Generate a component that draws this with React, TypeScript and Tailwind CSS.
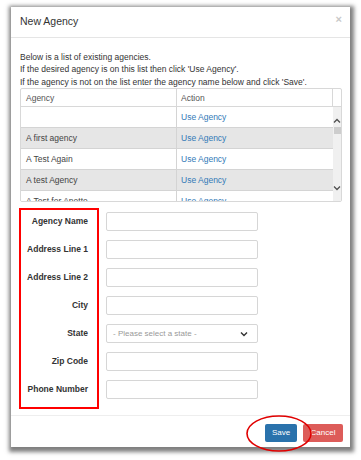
import React from "react";

const rows = ["", "A first agency", "A Test Again", "A test Agency", "A Test for Anette"];
const fields = ["Agency Name", "Address Line 1", "Address Line 2", "City", "State", "Zip Code", "Phone Number"];

export default function App() {
  return (
    <div
      className="relative w-[361px] h-[460px] bg-white overflow-hidden"
      style={{ fontFamily: '"Liberation Sans", Arial, sans-serif' }}
    >
      <div className="ml-[11px] mt-[7px] w-[339px] h-[440px] bg-white flex flex-col shadow-[1px_2px_4px_3px_rgba(0,0,0,0.5)]">
        {/* header */}
        <div className="h-[31px] border-b border-[#e5e5e5] flex items-start justify-between pl-[9px] pr-[8px] pt-[6px]">
          <span className="text-[10.5px] leading-[16px] text-[#333]">New Agency</span>
          <span className="text-[11px] leading-[12px] text-[#c8c8c8] font-bold">×</span>
        </div>
        {/* body */}
        <div className="pl-[9px] pr-[8px] pt-[13px] text-[8.5px] leading-[12.5px] text-[#333]">
          <div>Below is a list of existing agencies.</div>
          <div>If the desired agency is on this list then click 'Use Agency'.</div>
          <div>If the agency is not on the list enter the agency name below and click 'Save'.</div>
        </div>
        <div className="ml-[9px] w-[322px] h-[114px] border border-[#d8d8d8] rounded-[2px] flex flex-col overflow-hidden text-[8.5px]">
          <div className="h-[18px] flex border-b border-[#d8d8d8] shrink-0">
            <div className="w-[156px] border-r border-[#d8d8d8] pl-[5px] flex items-center text-[#555]">Agency</div>
            <div className="w-[156px] border-r border-[#d8d8d8] pl-[4px] flex items-center text-[#555]">Action</div>
            <div className="flex-1" />
          </div>
          <div className="flex flex-1 overflow-hidden">
            <div className="w-[312px] overflow-hidden">
              {rows.map((r, i) => (
                <div
                  key={i}
                  className={`h-[21px] flex border-b border-[#d4d4d4] ${i % 2 === 1 ? "bg-[#e6e6e6]" : "bg-white"}`}
                >
                  <div className="w-[156px] border-r border-[#d4d4d4] pl-[5px] flex items-center text-[#444]">{r}</div>
                  <div className="w-[156px] pl-[4px] flex items-center text-[#337ab7]">Use Agency</div>
                </div>
              ))}
            </div>
            <div className="flex-1 bg-[#f0f0f0] flex flex-col items-center">
              <svg width="8" height="6" viewBox="0 0 8 6" className="mt-[11px]">
                <path d="M1 4.5 L4 1.5 L7 4.5" fill="none" stroke="#505050" strokeWidth="1.3" />
              </svg>
              <div className="mt-[3px] w-[7px] h-[7px] bg-[#cdcdcd]" />
              <div className="flex-1" />
              <svg width="8" height="6" viewBox="0 0 8 6" className="mb-[10px]">
                <path d="M1 1.5 L4 4.5 L7 1.5" fill="none" stroke="#505050" strokeWidth="1.3" />
              </svg>
            </div>
          </div>
        </div>
        {/* form */}
        <div className="flex mt-[6px] ml-[8px]">
          <div className="w-[80px] h-[201px] border-2 border-[#ff0000] pt-[2px] pr-[9px] flex flex-col gap-[9px]">
            {fields.map((f) => (
              <div key={f} className="h-[19px] flex items-center justify-end text-[8.5px] font-bold text-[#333] whitespace-nowrap">
                {f}
              </div>
            ))}
          </div>
          <div className="ml-[7px] pt-[4px] flex flex-col gap-[9px]">
            {fields.map((f) =>
              f === "State" ? (
                <div
                  key={f}
                  className="w-[152px] h-[19px] border border-[#d6d6d6] rounded-[2px] flex items-center justify-between pl-[6px] pr-[9px] text-[8px] text-[#999]"
                >
                  <span>- Please select a state -</span>
                  <svg width="8" height="6" viewBox="0 0 8 6">
                    <path d="M1 1.5 L4 4.5 L7 1.5" fill="none" stroke="#333" strokeWidth="1.4" />
                  </svg>
                </div>
              ) : (
                <div key={f} className="w-[152px] h-[19px] border border-[#d6d6d6] rounded-[2px] bg-white" />
              )
            )}
          </div>
        </div>
        {/* footer */}
        <div className="mt-[6px] border-t border-[#eeeeee] h-[32px] flex justify-end items-start pt-[8px] pr-[7px] gap-[6px]">
          <div className="w-[32px] h-[18px] bg-[#2a72ac] rounded-[2px] flex items-center justify-center text-[8px] text-white">
            Save
          </div>
          <div className="w-[40px] h-[18px] bg-[#dd5c59] rounded-[2px] flex items-center justify-center text-[8px] text-white">
            Cancel
          </div>
        </div>
      </div>
      {/* annotation ellipse */}
      <svg className="absolute left-0 top-0 pointer-events-none" width="361" height="460">
        <ellipse cx="279" cy="433.5" rx="32" ry="17.5" fill="none" stroke="#e00000" strokeWidth="1.6" />
      </svg>
    </div>
  );
}
